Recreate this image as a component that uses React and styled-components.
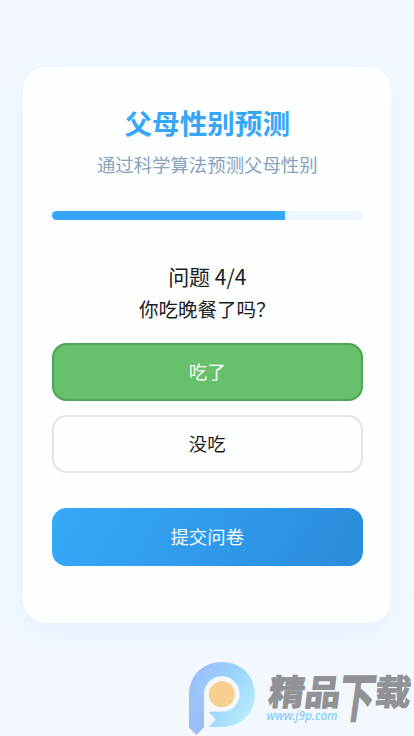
import React, { useState } from 'react';
import styled, { createGlobalStyle } from 'styled-components';

const GlobalStyle = createGlobalStyle`
* {
    box-sizing: border-box;
}
body {
    margin: 0;
    background: #f3f8ff;
    font-family: 'Noto Sans CJK SC', 'Noto Sans', sans-serif;
}
`;

const Page = styled.div`
position: relative;
height: 736px;
padding: 67px 23px 0;
overflow: hidden;
`;

const Card = styled.main`
display: flex;
flex-direction: column;
height: 555.5px;
padding: 36px 28.5px 0 29px;
border-radius: 23px;
background: #fdfefe;
box-shadow: 0 9px 28px rgba(54, 150, 235, 0.08);
text-align: center;
`;

const Title = styled.h1`
margin: 0;
font-size: 27.6px;
line-height: 38px;
font-weight: 700;
color: #36a7f8;
`;

const Subtitle = styled.p`
margin: 9px 0 0;
font-size: 18.4px;
line-height: 28px;
color: #86a2bd;
`;

const Track = styled.div`
flex: none;
height: 9px;
margin-top: 33px;
border-radius: 5px;
background: #edf5fe;
overflow: hidden;
`;

const Bar = styled.div`
height: 100%;
background: #36a7f8;
`;

const Question = styled.section`
margin-top: 40px;
color: #1b1c1d;
`;

const Step = styled.div`
font-size: 21px;
line-height: 33px;
`;

const Prompt = styled.div`
font-size: 19.55px;
line-height: 31px;
`;

const Options = styled.div`
display: flex;
flex-direction: column;
gap: 14px;
margin-top: 19px;
`;

const Button = styled.button`
width: 100%;
height: 58px;
padding: 0 0 2px;
border-radius: 14.5px;
font-family: inherit;
font-size: 18.4px;
line-height: 28px;
`;

const Option = styled(Button)`
border: 2px solid ${props => props.$selected ? '#4da552' : '#e1e5e6'};
background: ${props => props.$selected ? '#67c16b' : '#fdfefe'};
color: ${props => props.$selected ? '#fff' : '#1b1c1d'};
`;

const Submit = styled(Button)`
flex: none;
height: 58.5px;
margin-top: 34.5px;
border: none;
background: linear-gradient(120deg, #36a9f9, #2a8bdc);
color: #f4faff;
`;

const Watermark = styled.svg`
position: absolute;
left: 180px;
top: 650px;
`;

const answers = ['吃了', '没吃'];

const SiteMark = () => (
    <Watermark width='234' height='86' viewBox='0 0 234 86'>
        <defs>
            <linearGradient id='bowl' gradientUnits='userSpaceOnUse' x1='9' y1='40' x2='58' y2='76'>
                <stop offset='0' stopColor='#9bc3fa' />
                <stop offset='0.5' stopColor='#9ad5fc' />
                <stop offset='1' stopColor='#b6e9fd' />
            </linearGradient>
            <linearGradient id='stem' x1='0' y1='0' x2='0' y2='1'>
                <stop offset='0' stopColor='#9bc5fa' />
                <stop offset='1' stopColor='#9bbcf8' />
            </linearGradient>
        </defs>
        <path d='M9 45C9 24 24 12 42 12C61 12 75 26 75 44.5C75 63 61 77 42 77H28.7L35.7 69.5L28.7 61.7H42C52 61.7 59.7 54 59.7 44.2C59.7 34 52 26.3 42 26.3C32 26.3 24 34 24 45Z' fill='url(#bowl)' />
        <path d='M9 44H24V77.5L16.5 85L9 77.5Z' fill='url(#stem)' />
        <circle cx='41.8' cy='44.3' r='13' fill='#f7cf8e' />
        <g fill='#909296' stroke='#909296' strokeWidth='1.2' fontFamily='Noto Sans CJK SC, sans-serif' fontWeight='700'>
            <text transform='translate(87.5 54.5) skewX(-7)' fontSize='35' textLength='72' lengthAdjust='spacingAndGlyphs'>精品</text>
            <text transform='translate(156.5 66.5) skewX(-8) scale(0.68 1)' fontSize='53'>下</text>
            <text transform='translate(194 54.5) skewX(-6) scale(1.02 1)' fontSize='35'>载</text>
        </g>
        <text x='86.5' y='69.5' fontFamily='Noto Sans, sans-serif' fontSize='13' fontStyle='italic' fontWeight='500' fill='#83cdfa' textLength='71' lengthAdjust='spacingAndGlyphs'>www.j9p.com</text>
    </Watermark>
);

const App = () => {

    const [selected, setSelected] = useState(0);

    return (

        <Page>
            <GlobalStyle />
            <Card>
                <Title>父母性别预测</Title>
                <Subtitle>通过科学算法预测父母性别</Subtitle>

                <Track>
                    <Bar style={{ width: '75%' }} />
                </Track>

                <Question>
                    <Step>问题 4/4</Step>
                    <Prompt>你吃晚餐了吗？</Prompt>
                    <Options>
                        {answers.map((answer, i) => (
                            <Option key={answer} $selected={i === selected} onClick={() => setSelected(i)}>{answer}</Option>
                        ))}
                    </Options>
                </Question>

                <Submit type='submit'>提交问卷</Submit>
            </Card>
            <SiteMark />
        </Page>

    )

}

export default App;
